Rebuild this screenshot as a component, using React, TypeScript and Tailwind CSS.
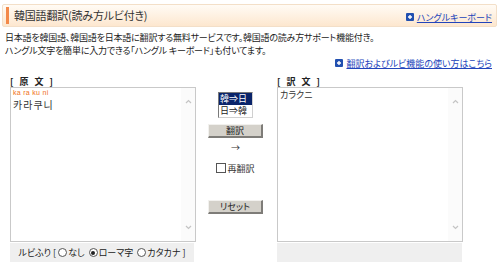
import React from "react";

const FONT = "font-['Noto_Sans_CJK_JP','Noto_Sans_CJK_KR',sans-serif] [font-feature-settings:'palt']";

const LinkIcon = () => (
  <span className="inline-flex items-center justify-center w-[8px] h-[8px] bg-[#2250b0] rounded-[1px] mr-[3px]">
    <svg width="6" height="6" viewBox="0 0 6 6">
      <path d="M1 3h4M3 1v4" stroke="#fff" strokeWidth="1.4" />
    </svg>
  </span>
);

const Chevron = ({ down }: { down?: boolean }) => (
  <svg width="7" height="5" viewBox="0 0 7 5">
    <path d={down ? "M1 1l2.5 2.5L6 1" : "M1 4l2.5-2.5L6 4"} stroke="#c4c4c4" strokeWidth="1.2" fill="none" />
  </svg>
);

const TextBox = ({ children }: { children?: React.ReactNode }) => (
  <div className="flex h-[155px] border border-[#c9c9c9] bg-white">
    <div className="flex-1 pl-[2px] pt-[1px]">{children}</div>
    <div className="w-[14px] flex flex-col items-center justify-between py-[11px] bg-[#fbfbfb]">
      <Chevron />
      <Chevron down />
    </div>
  </div>
);

const Radio = ({ checked }: { checked?: boolean }) => (
  <span className="inline-flex items-center justify-center w-[9px] h-[9px] rounded-full border border-[#555] bg-white mr-[1px]">
    {checked && <span className="w-[4px] h-[4px] rounded-full bg-[#222]" />}
  </span>
);

const GrayButton = ({ label }: { label: string }) => (
  <div className="w-[55px] h-[14px] flex items-center justify-center bg-[#d4d1ca] border-t border-l border-t-[#f2f1ee] border-l-[#f2f1ee] border-b-2 border-r-2 border-b-[#7e7c78] border-r-[#7e7c78] text-[9px] leading-none text-[#222]">
    {label}
  </div>
);

export default function App() {
  return (
    <div className={`w-[500px] h-[264px] bg-white text-[#333] overflow-hidden ${FONT}`}>
      {/* header */}
      <div className="mt-[4px] ml-[2px] w-[495px] h-[23px] flex items-center rounded-[2px] border border-[#f3dfc8] bg-gradient-to-b from-[#fffbf5] to-[#fde7cf]">
        <div className="ml-[3px] w-[3px] h-[17px] bg-[#f3894a]" />
        <span className="ml-[5px] text-[11px] leading-none text-[#333] tracking-[-0.2px]">韓国語翻訳(読み方ルビ付き)</span>
        <a className="ml-auto mr-[4px] mt-[3px] flex items-center text-[9px] leading-none text-[#2244bb] underline">
          <LinkIcon />
          ハングルキーボード
        </a>
      </div>

      {/* description */}
      <div className="mt-[4px] pl-[5px] text-[9px] leading-[13px] text-[#222] tracking-[-0.2px]">
        <p>日本語を韓国語、韓国語を日本語に翻訳する無料サービスです。韓国語の読み方サポート機能付き。</p>
        <p>ハングル文字を簡単に入力できる「ハングル キーボード」も付いてます。</p>
      </div>
      <div className="flex justify-end pr-[8px] h-[12px] items-center">
        <a className="flex items-center text-[9px] leading-none text-[#2244bb] underline">
          <LinkIcon />
          翻訳およびルビ機能の使い方はこちら
        </a>
      </div>

      {/* translator */}
      <div className="mt-[6px] ml-[10px] flex">
        <div className="w-[186px] flex flex-col">
          <div className="h-[12px] flex items-center text-[9px] font-bold text-[#222] leading-none tracking-[2px]">[ 原 文 ]</div>
          <TextBox>
            <div className="font-['Liberation_Sans',sans-serif] text-[7px] leading-[8px] text-[#f07020] tracking-[0.3px]">ka ra ku ni</div>
            <div className="text-[10px] leading-[15px] text-[#333] tracking-[1px]">카라쿠니</div>
          </TextBox>
          <div className="mt-[1px] w-[184px] h-[19px] bg-[#efefef] flex items-center justify-center text-[9px] text-[#222] leading-none">
            <span>ルビふり [&nbsp;</span>
            <Radio />
            <span>なし&nbsp;&nbsp;</span>
            <Radio checked />
            <span>ローマ字&nbsp;&nbsp;</span>
            <Radio />
            <span>カタカナ ]</span>
          </div>
        </div>

        <div className="w-[79px] flex flex-col items-center">
          <div className="mt-[17px] w-[35px] border border-t-[#7a7a7a] border-l-[#7a7a7a] border-b-[#d0d0d0] border-r-[#d0d0d0] bg-white text-[9px] leading-[12px]">
            <div className="bg-[#0a246a] text-white px-[1px]">韓⇒日</div>
            <div className="text-[#222] px-[1px]">日⇒韓</div>
          </div>
          <div className="mt-[6px]">
            <GrayButton label="翻訳" />
          </div>
          <div className="mt-[5px] h-[10px] text-[9px] leading-[10px] text-[#333]">→</div>
          <div className="mt-[9px] h-[12px] flex items-center text-[9px] leading-none text-[#333]">
            <span className="w-[10px] h-[10px] border border-[#555] bg-white mr-[1px]" />
            再翻訳
          </div>
          <div className="mt-[26px]">
            <GrayButton label="リセット" />
          </div>
        </div>

        <div className="ml-[2px] w-[186px] flex flex-col">
          <div className="h-[12px] flex items-center text-[9px] font-bold text-[#222] leading-none tracking-[2px]">[ 訳 文 ]</div>
          <TextBox>
            <div className="text-[9px] leading-[11px] text-[#333]">カラクニ</div>
          </TextBox>
          <div className="mt-[1px] w-[185px] h-[19px] bg-[#efefef]" />
        </div>
      </div>
    </div>
  );
}
